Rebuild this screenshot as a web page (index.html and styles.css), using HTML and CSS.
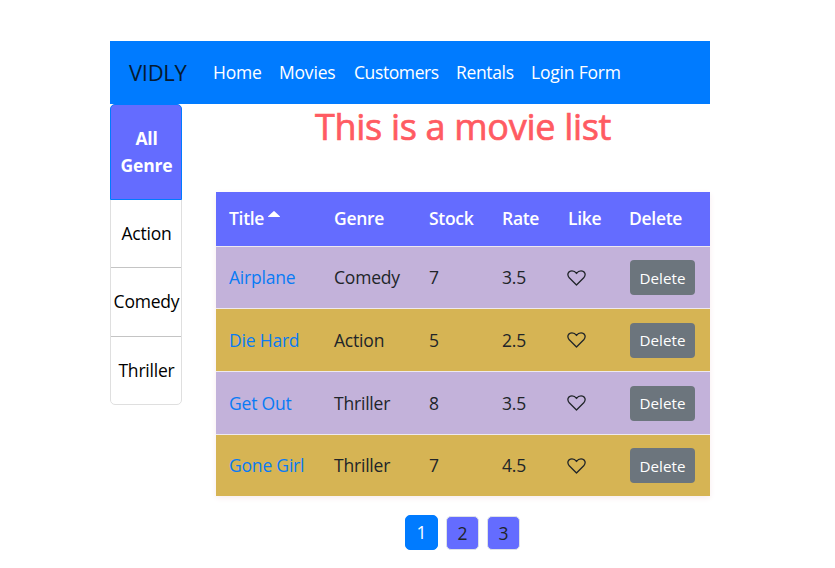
FILE: index.html
```html
<!DOCTYPE html>
<html lang="en">
<head>
<meta charset="utf-8">
<title>Vidly</title>
<link rel="stylesheet" href="styles.css">
</head>
<body>
<svg class="sprite" width="0" height="0" aria-hidden="true">
  <symbol id="heart" viewBox="0 0 20 17"><path d="M10 16 2.300 8.300C-.5 5 1 1 5.200 1 7.500 1 8.900 2.100 10 3.700 11.100 2.100 12.500 1 14.800 1c4.200 0 5.700 4 2.900 7.300z" fill="none" stroke="currentColor" stroke-width="1.400" stroke-linejoin="round"/></symbol>
</svg>
<div class="container">
  <nav class="navbar">
    <a class="brand">VIDLY</a>
    <a class="nav-link home">Home</a>
    <a class="nav-link movies">Movies</a>
    <a class="nav-link customers">Customers</a>
    <a class="nav-link rentals">Rentals</a>
    <a class="nav-link login">Login Form</a>
  </nav>
  <div class="content">
    <ul class="genres">
      <li class="active">All Genre</li>
      <li>Action</li>
      <li>Comedy</li>
      <li>Thriller</li>
    </ul>
    <main class="main">
      <h1>This is a movie list</h1>
      <table>
        <colgroup><col class="c-title"><col class="c-genre"><col class="c-stock"><col class="c-rate"><col class="c-like"><col></colgroup>
        <thead><tr><th>Title<svg class="caret" viewBox="0 0 12 6"><path d="M.5 6a.5.5 0 0 1-.3-.8L5.300.4a1 1 0 0 1 1.400 0l5.100 4.800a.5.5 0 0 1-.3.8z" fill="currentColor"/></svg></th><th>Genre</th><th>Stock</th><th>Rate</th><th>Like</th><th>Delete</th></tr></thead>
        <tbody>
          <tr><td><a>Airplane</a></td><td>Comedy</td><td>7</td><td>3.5</td><td><svg class="heart"><use href="#heart"/></svg></td><td><button>Delete</button></td></tr>
          <tr><td><a>Die Hard</a></td><td>Action</td><td>5</td><td>2.5</td><td><svg class="heart"><use href="#heart"/></svg></td><td><button>Delete</button></td></tr>
          <tr><td><a>Get Out</a></td><td>Thriller</td><td>8</td><td>3.5</td><td><svg class="heart"><use href="#heart"/></svg></td><td><button>Delete</button></td></tr>
          <tr><td><a>Gone Girl</a></td><td>Thriller</td><td>7</td><td>4.5</td><td><svg class="heart"><use href="#heart"/></svg></td><td><button>Delete</button></td></tr>
        </tbody>
      </table>
      <div class="pagination"><a class="current">1</a><a>2</a><a>3</a></div>
    </main>
  </div>
</div>
</body>
</html>
```
FILE: styles.css
```css
* { box-sizing: border-box; }
body { margin: 0; background: #fff; color: #212529; font: 17.5px/27px "Segoe UI", "Open Sans", sans-serif; letter-spacing: -.2px; }
.sprite { display: block; }
.container { width: 600px; margin: 41px 0 0 110px; }
.navbar { display: flex; align-items: center; height: 63px; padding-left: 19px; background: #007bff; color: #fff; }
.brand { width: 84px; color: #061a30; font-size: 22px; letter-spacing: -.3px; padding-bottom: 1px; }
.nav-link { white-space: nowrap; }
.home { width: 66px; }
.movies { width: 75px; }
.customers { width: 102px; letter-spacing: -.4px; }
.rentals { width: 75px; letter-spacing: -.35px; }
.content { display: flex; justify-content: space-between; align-items: flex-start; }
.genres { list-style: none; margin: 0; padding: 0; width: 72px; height: 301px; border: 1px solid #dfdfdf; border-radius: 5px; color: #000; display: flex; flex-direction: column; }
.genres li { flex: 1; display: flex; align-items: center; justify-content: center; text-align: center; border-top: 1px solid #c4c4c4; padding-left: 1px; }
.genres .active { flex: none; width: 72px; height: 96px; margin: -1px -1px 0; background: #646cff; border: 1px solid #007bff; border-radius: 5px 5px 0 0; color: #fff; font-weight: 700; }
.genres .active + li { border-top: 0; }
.main { width: 494px; }
h1 { margin: 0 0 40px; height: 48px; font-size: 36px; line-height: 46px; font-weight: 400; -webkit-text-stroke: .7px #ff5b62; text-align: center; color: #ff5b62; letter-spacing: -.3px; }
table { width: 100%; table-layout: fixed; border-collapse: separate; border-spacing: 0; box-shadow: 0 2px 6px #f7ecef; }
.c-title { width: 105px; }
.c-genre { width: 95px; }
.c-stock { width: 73px; }
.c-rate { width: 66px; }
.c-like { width: 61px; }
th, td { padding: 0 0 0 13px; text-align: left; white-space: nowrap; }
th { height: 54px; padding-bottom: 2px; background: #646cff; color: #fff; font-weight: 600; letter-spacing: -.3px; }
td { height: 63px; border-top: 1px solid #eee9ef; background: #c3b2da; }
tr:first-child td, tr:last-child td { height: 62px; }
tr:nth-child(even) td { background: #d6b454; }
td a { color: #087bf5; }
.caret { width: 12px; height: 6px; margin-left: 4px; vertical-align: 8px; }
.heart { display: block; width: 19px; height: 16px; margin-left: -1px; }
button { display: block; width: 65px; height: 35px; margin-left: 1px; padding: 0; border: 0; border-radius: 4px; background: #6c757d; color: #fff; font: 15.2px "Segoe UI", "Open Sans", sans-serif; }
.pagination { display: flex; justify-content: center; align-items: center; gap: 8px; margin: 19px 1px 0 0; height: 35px; }
.pagination a { width: 33px; height: 34px; line-height: 33px; text-align: center; background: #646cff; border: 1px solid #dee2e6; border-radius: 5px; }
.pagination .current { height: 35px; background: #007bff; border-color: #007bff; color: #fff; }
```
